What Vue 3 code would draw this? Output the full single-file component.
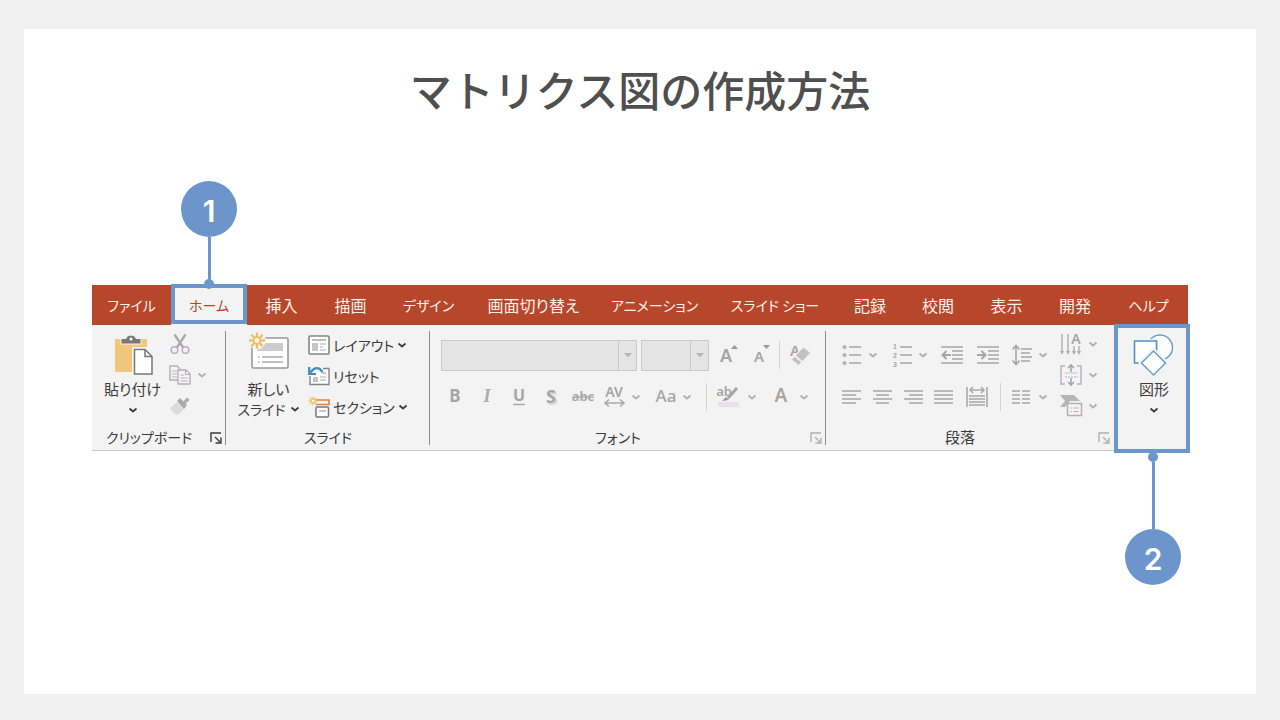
<script setup>
import { h } from 'vue'

const tabs = [
  { name: 'ファイル', kana: true },
  { name: 'ホーム', kana: true, active: true },
  { name: '挿入' },
  { name: '描画' },
  { name: 'デザイン', kana: true },
  { name: '画面切り替え' },
  { name: 'アニメーション', kana: true },
  { name: 'スライド ショー', kana: true },
  { name: '記録' },
  { name: '校閲' },
  { name: '表示' },
  { name: '開発' },
  { name: 'ヘルプ', kana: true },
]

const g = '#b3b1b3'
const lines = (rows) =>
  rows.map(([x1, x2, y]) => `<path d="M${x1} ${y}H${x2}" stroke="#b9b9b9" stroke-width="2"/>`).join('')
const letter = (x, y, size, t, extra = '') =>
  `<text x="${x}" y="${y}" font-family="Noto Sans, sans-serif" font-weight="600" font-size="${size}" text-anchor="middle" fill="#a5a5a5" ${extra}>${t}</text>`
const digit = (y, t) =>
  `<text x="3" y="${y}" font-family="Liberation Sans, sans-serif" font-weight="700" font-size="7" text-anchor="middle" fill="#a5a5a5">${t}</text>`
const spark = (cx, cy, r, w) => {
  let s = ''
  for (let i = 0; i < 8; i++) {
    const a = (i * Math.PI) / 4
    const p = (k) => `${(cx + Math.cos(a) * k).toFixed(1)} ${(cy + Math.sin(a) * k).toFixed(1)}`
    s += `<path d="M${p(r * 0.45)}L${p(r)}" stroke="#edbd60" stroke-width="${w}"/>`
  }
  return s + `<circle cx="${cx}" cy="${cy}" r="${r * 0.42}" fill="#fff8e8" stroke="#edbd60" stroke-width="${w * 0.8}"/>`
}

const icons = {
  chevron: [10, 8, `<path d="M1.5 2.5L5 5.5L8.5 2.5" fill="none" stroke="currentColor" stroke-width="1.800"/>`],
  launcher: [14, 14, `<path d="M2 11V2H12M6 6L11 11M12 6.500V12H6.500" fill="none" stroke="currentColor" stroke-width="1.400"/>`],
  paste: [40, 42, `<path d="M2 5H34V38H2Z" fill="#efc67a"/><path d="M8 10V4.500H13Q13.500 1 18 1T23 4.500H28V10Z" fill="#777" stroke="#f3f3f3"/><circle cx="18" cy="5" r="1.500" fill="#fff"/><path d="M19 13H34V40H19Z" fill="#f3f3f3"/><path d="M21.500 15.500H32L39 22.500V40H21.500Z" fill="#fff" stroke="#777" stroke-width="1.500"/><path d="M32 15.500V22.500H39" fill="none" stroke="#777" stroke-width="1.500"/>`],
  cut: [20, 20, `<path d="M4.500 0.500L13.500 14M15.500 0.500L6.500 14" stroke="#aaa" stroke-width="2.400"/><circle cx="4.500" cy="16" r="3.300" fill="#f6f0f7" stroke="${g}" stroke-width="1.500"/><circle cx="15.500" cy="16" r="3.300" fill="#f6f0f7" stroke="${g}" stroke-width="1.500"/>`],
  copy: [22, 20, `<path d="M1 1H8L11 4V15H1Z" fill="#f8f2f8" stroke="${g}" stroke-width="1.400"/><path d="M3 6H8M3 9H8M3 12H8" stroke="${g}" stroke-width="1.200"/><path d="M9 5H17L21 9V19H9Z" fill="#f8f2f8" stroke="${g}" stroke-width="1.400"/><path d="M16.500 5V9.500H21M11.500 10H15M11.500 13H18.500M11.500 16H18.500" fill="none" stroke="${g}" stroke-width="1.200"/>`],
  brush: [22, 20, `<path d="M1 12L8 6L15 13L9 19Q4 18 1 12Z" fill="#ded9de"/><path d="M8 5L11 2L18 9L15 13Z" fill="#aaa"/><path d="M14 6L18 1.500L20.500 4L16 8Z" fill="#aaa"/>`],
  newSlide: [42, 38, `<rect x="4" y="6" width="36" height="30" rx="1.500" fill="#fff" stroke="#999" stroke-width="1.600"/><path d="M9 11H35V19H9Z" fill="#ccc"/><path d="M10 25H11.500M14 25H35M10 30H11.500M14 30H35" stroke="#aaa" stroke-width="1.300"/><circle cx="9" cy="8.500" r="9" fill="#f3f3f3"/>${spark(9, 8.5, 8, 2.2)}`],
  layout: [22, 20, `<rect x="1" y="1" width="20" height="18" rx="1" fill="#fff" stroke="#858585" stroke-width="1.600"/><path d="M4 5H18" stroke="#bbb" stroke-width="2"/><path d="M4 8H10V16H4Z" fill="#c5c5c5"/><path d="M12 9H18M12 12H15M12 15H18" stroke="#aaa"/>`],
  reset: [22, 20, `<path d="M15 2.500H21V18.500H2V10" fill="#fff" stroke="#858585" stroke-width="1.400"/><path d="M9 6H18V16H5V11Z" fill="#fff"/><path d="M5 11H10V16H5ZM14 6H18V8H14Z" fill="#c5c5c5"/><path d="M12 11H18M12 14H18" stroke="#aaa"/><path d="M2.500 6.500Q9 -2 14.500 6" fill="none" stroke="#4388c4" stroke-width="2.400"/><path d="M1.200 1V8H8" fill="none" stroke="#4388c4" stroke-width="2.200"/>`],
  section: [22, 22, `<path d="M8 4H21V8.500H8" fill="none" stroke="#ea8038" stroke-width="1.700"/><rect x="8" y="11" width="12.500" height="10" rx="1" fill="#fff" stroke="#777" stroke-width="1.500"/><path d="M11 15H18" stroke="#aaa" stroke-width="1.300"/>${spark(5, 5, 4.5, 1.3)}`],
  caret: [8, 5, `<path d="M0 0H8L4 4.500Z" fill="#b5b5b5"/>`],
  grow: [22, 22, letter(8, 18, 18, 'A') + `<path d="M13 5L16.500 1L20 5Z" fill="#999"/>`],
  shrink: [22, 22, letter(9, 18, 15, 'A') + `<path d="M13 1H20L16.500 5Z" fill="#999"/>`],
  eraser: [22, 22, letter(6, 12, 15, 'A') + `<path d="M5 12L14 2L22 9L12 20Z" fill="#f3f3f3"/><path d="M7 11.500L14.500 3.500L21 9L13.500 17Z" fill="#c3c0c4"/><path d="M5.500 13L12 18L9.500 21L3 15.500Z" fill="#c3c0c4"/>`],
  bold: [22, 22, letter(11, 16, 17, 'B', 'style="font-weight:700"')],
  italic: [22, 22, `<text x="11" y="16" font-family="Liberation Serif, serif" font-style="italic" font-weight="700" font-size="18" text-anchor="middle" fill="#aaa">I</text>`],
  underline: [22, 22, letter(11, 15, 16, 'U', 'style="font-weight:700"') + `<path d="M5 18.500H17" stroke="#aaa" stroke-width="1.500"/>`],
  shadow: [22, 24, `<text x="13" y="20" font-family="Noto Sans, sans-serif" font-weight="700" font-size="18" text-anchor="middle" fill="#d6d6d6">S</text>` + letter(11, 18, 18, 'S', 'style="font-weight:700"')],
  strike: [24, 20, letter(12, 14, 13, 'abc') + `<path d="M1 10H23" stroke="#aaa" stroke-width="1.400"/>`],
  spacing: [24, 22, letter(11, 11, 14, 'AV') + `<path d="M2 17H21M6 13.500L2 17L6 20.500M17 13.500L21 17L17 20.500" fill="none" stroke="#aaa" stroke-width="1.600"/>`],
  case: [24, 22, letter(12, 16, 17, 'Aa', 'style="font-weight:500"')],
  marker: [24, 22, letter(7, 10, 13, 'ab') + `<path d="M20 2L11 12" stroke="#a5a5a5" stroke-width="3"/><path d="M5 15L9 11L12 14Z" fill="#999"/><path d="M1 16H22V21H1Z" fill="#e8e1e8"/>`],
  color: [22, 22, letter(11, 16, 19, 'A')],
  bullets: [20, 22, `<circle cx="2.500" cy="3" r="2" fill="${g}"/><circle cx="2.500" cy="11" r="2" fill="${g}"/><circle cx="2.500" cy="19" r="2" fill="${g}"/>` + lines([[7, 19, 3], [7, 19, 11], [7, 19, 19]])],
  numbers: [20, 22, digit(5, '1') + digit(14, '2') + digit(23, '3') + lines([[8, 20, 3], [8, 20, 11], [8, 20, 19]])],
  outdent: [22, 20, lines([[0, 22, 2], [11, 22, 6], [11, 22, 10], [11, 22, 14], [0, 22, 18]]) + `<path d="M10 10H2M5.500 6L1.500 10L5.500 14" fill="none" stroke="#a5a5a5" stroke-width="2"/>`],
  indent: [22, 20, lines([[0, 22, 2], [11, 22, 6], [11, 22, 10], [11, 22, 14], [0, 22, 18]]) + `<path d="M0 10H8M4.500 6L8.500 10L4.500 14" fill="none" stroke="#a5a5a5" stroke-width="2"/>`],
  lineSpacing: [20, 22, `<path d="M4 2V20M0.500 5.500L4 1.500L7.500 5.500M0.500 16.500L4 20.500L7.500 16.500" fill="none" stroke="#a5a5a5" stroke-width="1.600"/>` + lines([[9, 20, 5], [9, 18, 9], [9, 20, 13], [9, 18, 17]])],
  left: [20, 16, lines([[0, 19, 2], [0, 14, 6], [0, 19, 10], [0, 14, 14]])],
  center: [20, 16, lines([[0, 19, 2], [3, 16, 6], [0, 19, 10], [3, 16, 14]])],
  right: [20, 16, lines([[0, 19, 2], [5, 19, 6], [0, 19, 10], [5, 19, 14]])],
  justify: [20, 16, lines([[0, 19, 2], [0, 19, 6], [0, 19, 10], [0, 19, 14]])],
  distribute: [24, 24, `<path d="M2 2V22M22 2V22M5 5H19M8 2L5 5L8 8M16 2L19 5L16 8" fill="none" stroke="#a9a9a9" stroke-width="1.600"/>` + lines([[4, 20, 11], [4, 20, 14], [4, 20, 17], [4, 20, 20]])],
  columns: [20, 16, lines([[0, 8, 2], [0, 8, 6], [0, 8, 10], [0, 8, 14], [10, 18, 2], [10, 18, 6], [10, 18, 10], [10, 18, 14]])],
  direction: [22, 22, `<path d="M2 1V20M8 1V20M14 13V20M19 13V20M0.500 18L2 20.500L3.500 18M6.500 18L8 20.500L9.500 18M12.500 18L14 20.500L15.500 18M17.500 18L19 20.500L20.500 18" fill="none" stroke="#b0aeb0" stroke-width="1.400"/>` + letter(16, 11, 14, 'A')],
  alignText: [22, 22, `<path d="M5 2H1V20H5M17 2H21V20H17" fill="#f8f2f8" stroke="${g}" stroke-width="1.400"/><path d="M5 9H18M5 13H18" stroke="${g}" stroke-width="1.200" stroke-dasharray="2 1"/><path d="M11 1V8M11 14V21M8 4L11 1L14 4M8 18L11 21L14 18" fill="none" stroke="#a5a5a5" stroke-width="1.600"/>`],
  smartArt: [22, 24, `<path d="M0 1H14L20 7H10L5 13H0L5 7Z" fill="#b5b5b5"/><rect x="7.500" y="9.500" width="14" height="12" fill="#f8f2f8" stroke="${g}" stroke-width="1.500"/><path d="M10.500 14H12M13.500 14H18.500M10.500 17.500H12M13.500 17.500H18.500" stroke="${g}" stroke-width="1.200"/>`],
  shapes: [42, 42, `<circle cx="27" cy="13.500" r="12.500" fill="#fff" stroke="#6ba0cf" stroke-width="1.500"/><path d="M1.500 7H23.500V29H1.500Z" fill="#fff" stroke="#f3f3f3" stroke-width="4"/><path d="M1.500 7H23.500V29H1.500Z" fill="#fff" stroke="#4f91ca" stroke-width="1.600"/><path d="M20.500 13L36 29L20.500 44L5 29Z" fill="#f3f3f3"/><path d="M20.500 17L32.500 29L20.500 41L8.500 29Z" fill="#fff" stroke="#6ba0cf" stroke-width="1.500"/>`],
}

const Icon = ({ name }) => {
  const [w, ht, body] = icons[name]
  return h('svg', { width: w, height: ht, viewBox: `0 0 ${w} ${ht}`, 'aria-hidden': 'true', innerHTML: body })
}
Icon.props = ['name']

const clipTools = [
  { icon: 'cut', label: '切り取り' },
  { icon: 'copy', label: 'コピー', menu: true },
  { icon: 'brush', label: '書式のコピー' },
]
const slideTools = [
  { icon: 'layout', label: 'レイアウト', menu: true },
  { icon: 'reset', label: 'リセット' },
  { icon: 'section', label: 'セクション', menu: true },
]
const fontStyles = [
  { icon: 'bold', label: '太字' },
  { icon: 'italic', label: '斜体' },
  { icon: 'underline', label: '下線' },
  { icon: 'shadow', label: '影' },
  { icon: 'strike', label: '取り消し線' },
  { icon: 'spacing', label: '文字の間隔', menu: true },
  { icon: 'case', label: '文字種の変換', menu: true, after: true },
]
const fontColors = [
  { icon: 'marker', label: '蛍光ペンの色', menu: true },
  { icon: 'color', label: 'フォントの色', menu: true },
]
const listTools = [
  { icon: 'bullets', label: '箇条書き', menu: true },
  { icon: 'numbers', label: '段落番号', menu: true },
  { icon: 'outdent', label: 'インデントを減らす' },
  { icon: 'indent', label: 'インデントを増やす' },
  { icon: 'lineSpacing', label: '行間', menu: true },
]
const alignTools = [
  { icon: 'left', label: '左揃え' },
  { icon: 'center', label: '中央揃え' },
  { icon: 'right', label: '右揃え' },
  { icon: 'justify', label: '両端揃え' },
  { icon: 'distribute', label: '均等割り付け' },
]
const textTools = [
  { icon: 'direction', label: '文字列の方向', menu: true },
  { icon: 'alignText', label: '文字の配置', menu: true },
  { icon: 'smartArt', label: 'SmartArt に変換', menu: true },
]
</script>

<template>
  <div class="page">
    <main class="sheet">
      <h1>マトリクス図の作成方法</h1>

      <section class="ribbon">
        <nav class="tabs">
          <div v-for="t in tabs" :key="t.name" class="tab" :class="{ active: t.active }">
            <button :class="{ kana: t.kana }">{{ t.name }}</button>
            <div v-if="t.active" class="callout above">
              <span class="badge">1</span><i class="stem"></i><i class="dot"></i>
            </div>
          </div>
        </nav>

        <div class="panel">
          <section class="group ruled">
            <div class="content clipboard">
              <button class="big">
                <Icon name="paste" />
                <span class="kanji">貼り付け</span>
                <Icon name="chevron" />
              </button>
              <div class="stack muted">
                <button v-for="t in clipTools" :key="t.icon" class="tool" :aria-label="t.label">
                  <span class="slot narrow"><Icon :name="t.icon" /></span>
                  <Icon v-if="t.menu" name="chevron" />
                </button>
              </div>
            </div>
            <footer>
              <span>クリップボード</span>
              <button class="launch" aria-label="クリップボードの設定"><Icon name="launcher" /></button>
            </footer>
          </section>

          <section class="group ruled">
            <div class="content slides">
              <button class="big">
                <Icon name="newSlide" />
                <span class="kanji">新しい</span>
                <span class="second">スライド <Icon name="chevron" /></span>
              </button>
              <div class="stack">
                <button v-for="t in slideTools" :key="t.icon" class="tool named">
                  <Icon :name="t.icon" />
                  <span>{{ t.label }}</span>
                  <Icon v-if="t.menu" name="chevron" />
                </button>
              </div>
            </div>
            <footer><span>スライド</span></footer>
          </section>

          <section class="group ruled">
            <div class="content rows muted font">
              <div class="row">
                <div class="combo wide">
                  <select aria-label="フォント"></select><span class="arrow"><Icon name="caret" /></span>
                </div>
                <div class="combo">
                  <select aria-label="フォント サイズ"></select><span class="arrow"><Icon name="caret" /></span>
                </div>
                <button class="tool first-size" aria-label="拡大"><span class="slot"><Icon name="grow" /></span></button>
                <button class="tool" aria-label="縮小"><span class="slot"><Icon name="shrink" /></span></button>
                <i class="rule"></i>
                <button class="tool" aria-label="書式のクリア"><span class="slot"><Icon name="eraser" /></span></button>
              </div>
              <div class="row">
                <button v-for="t in fontStyles" :key="t.icon" class="tool" :class="{ spaced: t.after }" :aria-label="t.label">
                  <span class="slot"><Icon :name="t.icon" /></span>
                  <Icon v-if="t.menu" name="chevron" />
                </button>
                <i class="rule far"></i>
                <button v-for="t in fontColors" :key="t.icon" class="tool pad" :aria-label="t.label">
                  <span class="slot"><Icon :name="t.icon" /></span>
                  <Icon name="chevron" />
                </button>
              </div>
            </div>
            <footer class="muted-launch">
              <span>フォント</span>
              <button class="launch" aria-label="フォントの設定"><Icon name="launcher" /></button>
            </footer>
          </section>

          <section class="group">
            <div class="content paragraph muted">
              <div class="rows">
                <div class="row spread">
                  <button v-for="t in listTools" :key="t.icon" class="tool bare" :aria-label="t.label">
                    <Icon :name="t.icon" />
                    <Icon v-if="t.menu" name="chevron" />
                  </button>
                </div>
                <div class="row spread">
                  <button v-for="t in alignTools" :key="t.icon" class="tool bare" :aria-label="t.label">
                    <Icon :name="t.icon" />
                  </button>
                  <i class="rule"></i>
                  <button class="tool bare" aria-label="段組み"><Icon name="columns" /><Icon name="chevron" /></button>
                </div>
              </div>
              <div class="stack">
                <button v-for="t in textTools" :key="t.icon" class="tool bare" :aria-label="t.label">
                  <Icon :name="t.icon" />
                  <Icon name="chevron" />
                </button>
              </div>
            </div>
            <footer class="muted-launch">
              <span class="kanji">段落</span>
              <button class="launch" aria-label="段落の設定"><Icon name="launcher" /></button>
            </footer>
          </section>

          <section class="group shapes">
            <button class="big">
              <Icon name="shapes" />
              <span class="kanji">図形</span>
              <Icon name="chevron" />
            </button>
            <div class="callout below">
              <i class="dot"></i><i class="stem"></i><span class="badge">2</span>
            </div>
          </section>
        </div>
      </section>
    </main>
  </div>
</template>

<style>
body {
  background: #f1f1f1;
}
</style>

<style scoped>
* {
  box-sizing: border-box;
}
.page {
  min-height: 100vh;
  display: flex;
  padding: 29px 24px 26px;
  background: #f1f1f1;
  color: #3c3c3c;
  font-family: "Noto Sans CJK JP", sans-serif;
  font-feature-settings: "palt";
}
.sheet {
  flex: 1;
  min-width: 0;
  background: #fff;
  padding: 28px 68px 0;
}
h1 {
  margin: 0;
  font-size: 42px;
  line-height: 64px;
  font-weight: 500;
  font-feature-settings: normal;
  text-align: center;
  color: #4f4f4f;
}
svg {
  display: block;
  flex: none;
  overflow: visible;
}
button {
  border: 0;
  padding: 0;
  background: none;
  color: inherit;
  font: inherit;
  font-feature-settings: inherit;
}
.ribbon {
  margin-top: 164px;
}
.tabs {
  display: grid;
  grid-template-columns: 79fr 76fr 69fr 69fr 87fr 123fr 119fr 122fr 68fr 68fr 69fr 68fr 79fr;
  height: 40px;
  background: #b7472a;
  color: #fdf0ea;
}
.tab {
  position: relative;
  display: flex;
}
.tab button {
  flex: 1;
  min-width: 0;
  white-space: nowrap;
  font-size: 16px;
  line-height: 24px;
}
.tab button.kana {
  font-size: 14px;
}
.tab.active {
  background: #f3f3f3;
  color: #b7472a;
}
.tab.active::after,
.shapes::after {
  content: "";
  position: absolute;
  inset: -1px 0 1px;
  border: 4px solid #6c96cb;
  pointer-events: none;
}
.callout {
  position: absolute;
  z-index: 2;
  left: 50%;
  width: 56px;
  margin-left: -28px;
  display: flex;
  flex-direction: column;
  align-items: center;
}
.callout.above {
  bottom: 36px;
}
.callout.below {
  top: 127px;
}
.badge {
  width: 56px;
  height: 56px;
  border-radius: 50%;
  background: #6c96cb;
  color: #fff;
  font: 600 30px/60px Inter, sans-serif;
  text-align: center;
}
.stem {
  width: 3px;
  height: 42px;
  background: #6c96cb;
}
.below .stem {
  height: 67px;
}
.dot {
  width: 10px;
  height: 10px;
  border-radius: 50%;
  background: #6c96cb;
}
.panel {
  display: grid;
  grid-template-columns: 134fr 204fr 396fr 288fr 74fr;
  height: 126px;
  background: #f3f3f3;
  border-bottom: 1px solid #c8c8c8;
  font-size: 14px;
  line-height: 20px;
}
.kanji {
  font-size: 15px;
}
.group {
  position: relative;
  min-width: 0;
  display: flex;
  flex-direction: column;
}
.ruled::after {
  content: "";
  position: absolute;
  right: 0;
  top: 6px;
  bottom: 5px;
  width: 1px;
  background: #8e8e8e;
}
.content {
  flex: 1;
  display: flex;
}
.muted,
.muted-launch .launch {
  color: #b0b0b0;
}
footer {
  display: grid;
  grid-template-columns: 1fr;
  align-items: center;
  height: 22px;
  margin-bottom: 2px;
}
footer > * {
  grid-area: 1 / 1;
}
footer > span {
  justify-self: center;
}
.clipboard + footer > span,
.font + footer > span,
.paragraph + footer > span {
  padding-right: 20px;
}
.launch {
  justify-self: end;
  margin: 2px 3px 0 0;
}
.big {
  display: flex;
  flex-direction: column;
  align-items: center;
  white-space: nowrap;
}
.clipboard {
  padding: 9px 0 0 12px;
  gap: 8px;
}
.big svg:first-child {
  margin-bottom: 3px;
}
.big > svg:last-child {
  margin-top: 7px;
}
.clipboard .big {
  width: 57px;
}
.stack {
  display: flex;
  flex-direction: column;
}
.tool {
  display: flex;
  align-items: center;
  height: 31px;
}
.slot {
  width: 32px;
  display: flex;
  justify-content: center;
}
.slot.narrow {
  width: 22px;
  margin-right: 6px;
}
.clipboard .stack {
  margin-top: -6px;
}
.slides {
  padding: 4px 0 0 11px;
  gap: 8px;
}
.slides .big {
  width: 63px;
  padding-top: 3px;
}
.slides .big svg:first-child {
  margin-bottom: 9px;
}
.second {
  display: flex;
  align-items: center;
  gap: 4px;
}
.slides .second svg:last-child {
  margin: 0;
}
.named {
  gap: 3px;
}
.rows {
  flex: 1;
  display: flex;
  flex-direction: column;
  gap: 10px;
  padding-top: 14px;
}
.row {
  display: flex;
  align-items: center;
  height: 32px;
}
.font {
  padding-left: 9px;
}
.combo {
  display: grid;
  grid-template-columns: 1fr 18px;
  width: 68px;
  height: 31px;
  border: 1px solid #c9c9c9;
  background: #e5e5e5;
}
.combo.wide {
  width: 196px;
  margin: 0 4px 0 2px;
}
select {
  grid-area: 1 / 1 / 2 / 3;
  width: 100%;
  appearance: none;
  border: 0;
  background: none;
}
.arrow {
  grid-area: 1 / 2;
  display: grid;
  place-items: center;
  border-left: 1px solid #c9c9c9;
  pointer-events: none;
}
.first-size {
  margin-left: 4px;
}
.rule {
  width: 1px;
  height: 28px;
  margin: 0 4px 0 2px;
  background: #d2d2d2;
}
.rule.far {
  margin: 0 6px 0 14px;
}
.spaced {
  margin-left: 9px;
}
.pad {
  gap: 2px;
  margin-right: 8px;
}
.paragraph .rows {
  flex: none;
  width: 206px;
  margin-left: 16px;
}
.spread {
  justify-content: space-between;
}
.spread .rule {
  margin: 0;
}
.bare {
  gap: 6px;
}
.paragraph > .stack {
  margin: 3px 0 0 12px;
}
.shapes .big {
  flex: 1;
  padding: 9px 0 0 6px;
}
.shapes::after {
  inset: -1px -2px -3px 0;
}
.shapes .callout {
  margin-left: -26px;
}
</style>
